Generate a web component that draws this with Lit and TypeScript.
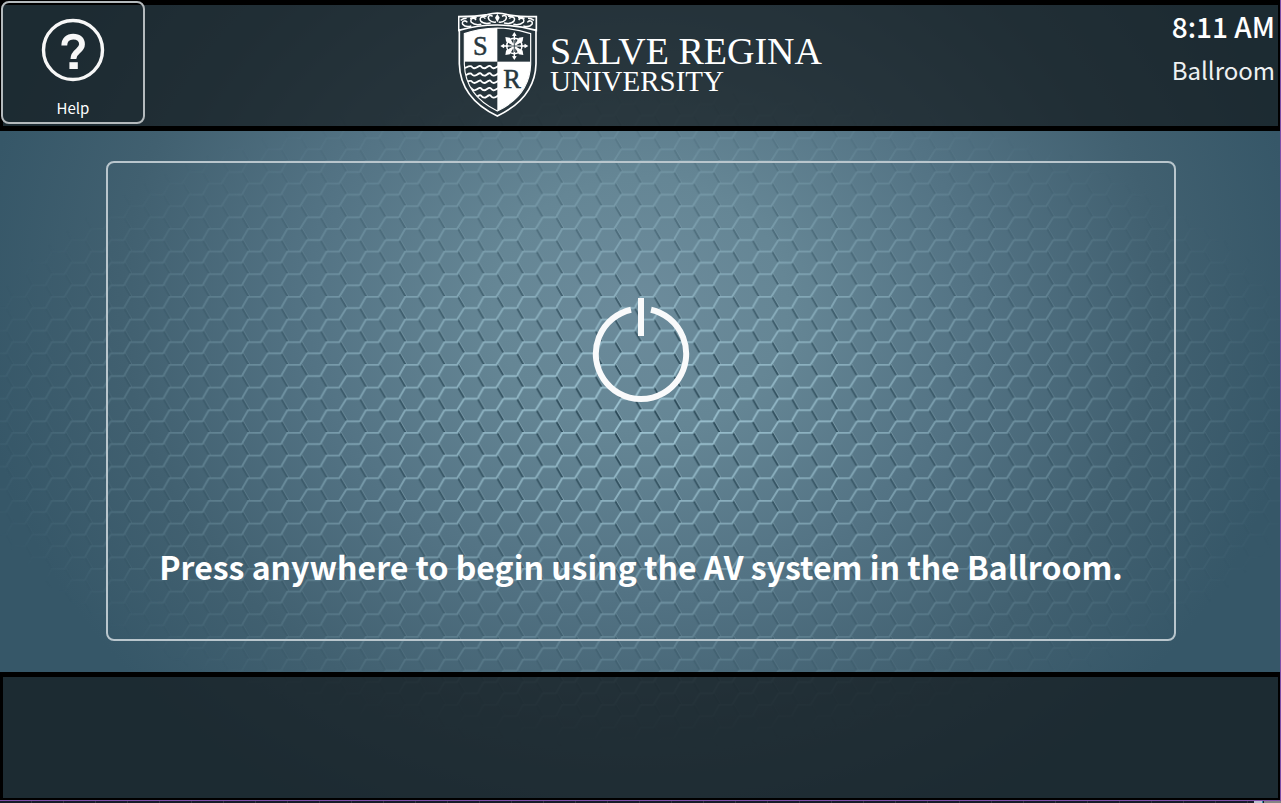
import { LitElement, html, svg, css } from "lit";
import { customElement, property } from "lit/decorators.js";

@customElement("hex-backdrop")
class HexBackdrop extends LitElement {
  static styles = css`
    :host {
      display: block;
      background: radial-gradient(
        ellipse 52% 72% at 50% 38%,
        #6c8b9b 0%,
        #658695 22%,
        #537384 50%,
        #416070 78%,
        #365768 100%
      );
    }
    svg {
      display: block;
      width: 100%;
      height: 100%;
    }
  `;
  render() {
    return html`<svg viewBox="0 0 1280 800" preserveAspectRatio="xMidYMid slice" aria-hidden="true">
      <defs>
        <pattern id="hex" width="39.27" height="22.67" patternUnits="userSpaceOnUse" patternTransform="translate(726 432)">
          <g fill="none" stroke-linecap="round">
            <path d="M6.5 0L13.1 11.3M26.2 11.3L32.7 22.6" stroke="#1d3b49" stroke-width="2.1" />
            <path d="M7.9 0L14.5 11.3M27.6 11.3L34.1 22.6" stroke="#a3c3cf" stroke-width=".7" />
            <path
              d="M0 .7H6.5M32.7 .7H39.3M13.1 12H26.2L32.7 .7M13.1 12L6.5 22.67"
              stroke="#a6cddb"
              stroke-width="1.9"
            />
          </g>
        </pattern>
        <radialGradient id="fade" gradientUnits="userSpaceOnUse" cx="0" cy="0" r="1" gradientTransform="translate(640 415) scale(690 335)">
          <stop offset="0" stop-color="#fff" stop-opacity=".88" />
          <stop offset=".3" stop-color="#fff" stop-opacity=".6" />
          <stop offset=".65" stop-color="#fff" stop-opacity=".25" />
          <stop offset="1" stop-color="#fff" stop-opacity="0" />
        </radialGradient>
        <mask id="vignette" maskUnits="userSpaceOnUse" x="0" y="0" width="1280" height="800">
          <rect width="1280" height="800" fill="url(#fade)" />
        </mask>
      </defs>
      <rect width="1280" height="800" fill="url(#hex)" mask="url(#vignette)" />
    </svg>`;
  }
}

@customElement("university-logo")
class UniversityLogo extends LitElement {
  static styles = css`
    :host {
      display: flex;
      gap: 12px;
      color: #fff;
      font-family: "Liberation Serif", serif;
    }
    svg {
      display: block;
      width: 80px;
      height: 106px;
    }
    .name {
      display: flex;
      flex-direction: column;
      padding-top: 20px;
      white-space: nowrap;
    }
    .top {
      font-size: 38px;
      line-height: 38px;
    }
    .bottom {
      font-size: 29px;
      line-height: 22px;
    }
  `;
  render() {
    const waves = [190, 212, 234, 256, 278];
    const scrolls = [1, -1];
    const rays = [0, 45, 90, 135, 180, 225, 270, 315];
    return html`<svg viewBox="24 23 240 318" aria-hidden="true">
        <defs>
          <clipPath id="inner"><path d="M43 88Q90 72 142 71Q194 72 242 88V180C240 245 200 292 142 320C84 292 45 245 43 180Z" /></clipPath>
        </defs>
        <path d="M28 76V178C30 258 80 305 142 335C204 305 256 258 258 178V76" fill="none" stroke="#fff" stroke-width="5" />
        <path d="M26 37Q80 37 112 31Q142 22 172 31Q204 37 259 37V78Q142 46 26 78Z" fill="none" stroke="#fff" stroke-width="5" />
        ${scrolls.map(
          (s) => svg`<g transform="translate(142 0) scale(${s} 1)" fill="none" stroke="#fff" stroke-width="4.5">
            <path d="M4 53Q16 55 24 47C32 36 22 30 14 36M20 56Q42 60 50 50C56 38 42 34 36 43M48 60Q68 64 78 54C84 42 70 38 64 47M78 65Q96 70 104 60C108 50 96 46 90 54M32 36Q42 34 50 39M62 40Q72 38 82 42M92 42Q102 42 110 48" />
          </g>`
        )}
        <path d="M142 28L149 40L142 54L135 40Z" fill="#fff" />
        <g clip-path="url(#inner)">
          <rect x="40" y="66" width="102" height="106" fill="#fff" />
          <rect x="142" y="172" width="104" height="156" fill="#fff" />
          ${waves.map(
            (y) => svg`<path d="M34 ${y - 4}q8 8 16 3t14 -3q7 10 17 3t12 -3q8 10 17 3t12 -3q7 10 17 3t12 -3" fill="none" stroke="#fff" stroke-width="5.5" />`
          )}
        </g>
        <path d="M43 88Q90 72 142 71Q194 72 242 88V180C240 245 200 292 142 320C84 292 45 245 43 180Z" fill="none" stroke="#fff" stroke-width="3.5" />
        <g transform="translate(193 125)" stroke="#fff" fill="#fff">
          ${rays.map(
            (a, i) => svg`<g transform="rotate(${a})">
              <path d="${i % 2 ? "M-3 -8L-8 -27L0 -38L8 -27L3 -8Z" : "M-3 -8L-2 -30L-7 -31L0 -42L7 -31L2 -30L3 -8Z"}" stroke="none" />
            </g>`
          )}
          <circle r="23" fill="none" stroke-width="4.5" />
          <circle r="9" stroke="none" />
          <path d="M0 -18V18M-18 0H18" stroke="#27373e" stroke-width="2.5" />
        </g>
        <g fill="#27373e" stroke="#27373e" stroke-width="1.5" font-family="Liberation Serif, serif" text-anchor="middle">
          <text x="91" y="151" font-size="79">S</text>
          <text x="186" y="251" font-size="79">R</text>
        </g>
      </svg>
      <div class="name"><span class="top">SALVE REGINA</span><span class="bottom">UNIVERSITY</span></div>`;
  }
}

@customElement("app-root")
class AppRoot extends LitElement {
  @property() room = "Ballroom";
  @property() time = "8:11 AM";

  static styles = css`
    :host {
      display: grid;
      grid-template-rows: 1fr auto;
      min-height: 100vh;
      background: #14171f;
      color: #fff;
      font-family: "Noto Sans CJK SC", "Noto Sans", sans-serif;
    }
    .panel {
      display: grid;
      border-right: 1px solid #7f4fa8;
      border-bottom: 1px solid #7f4fa8;
    }
    .backdrop,
    .screen {
      grid-area: 1 / 1;
    }
    .backdrop {
      min-height: 0;
      contain: size;
    }
    .screen {
      z-index: 1;
      display: grid;
      grid-template-rows: auto 1fr auto;
    }
    .bar {
      background: rgba(17, 23, 26, 0.69);
      box-shadow: inset 3px 0 #000, inset -2px 0 #000, inset 0 5px #000, inset 0 -5px #000;
    }
    header {
      display: grid;
      grid-template-columns: 1fr auto 1fr;
      height: 131px;
    }
    footer {
      height: 128px;
      box-sizing: border-box;
    }
    footer.bar {
      box-shadow: inset 3px 0 #000, inset -2px 0 #000, inset 0 5px #000, inset 0 -2px #000;
    }
    button {
      background: none;
      color: inherit;
      font-family: inherit;
      cursor: pointer;
      padding: 0;
      border-radius: 8px;
    }
    .help {
      display: flex;
      flex-direction: column;
      align-items: center;
      justify-self: start;
      gap: 14px;
      width: 144px;
      height: 123px;
      margin: 1px;
      padding-top: 15px;
      box-sizing: border-box;
      border: 2px solid #b4babd;
      font-size: 15px;
      line-height: 24px;
    }
    .help svg {
      display: block;
      width: 64px;
      height: 64px;
    }
    university-logo {
      padding-top: 12px;
    }
    .status {
      display: flex;
      flex-direction: column;
      align-items: flex-end;
      padding: 4px 5px 0 0;
    }
    .time {
      font-size: 28px;
      line-height: 44px;
      font-weight: 500;
    }
    .room {
      font-size: 24px;
      line-height: 44px;
      color: #eef1f2;
    }
    main {
      display: grid;
      padding: 30px 104px 31px 106px;
    }
    .start {
      display: flex;
      flex-direction: column;
      align-items: center;
      justify-content: space-between;
      padding: 134px 16px 48px;
      border: 2px solid #b9c6cd;
    }
    .start svg {
      display: block;
      width: 98px;
      height: 106px;
    }
    .prompt {
      font-size: 32px;
      line-height: 50px;
      font-weight: 700;
    }
    .edge {
      display: flex;
      justify-content: flex-end;
      height: 2px;
      background: repeating-linear-gradient(90deg, #171c29 0 31px, #30343f 31px 32px);
    }
    .edge-light {
      width: 8px;
      background: #b9bfcc;
      border-right: 1px solid #2a8ba4;
    }
    .edge-gray {
      width: 17px;
      margin-left: 1px;
      background: #858585;
    }
  `;

  render() {
    return html`
      <div class="panel">
        <hex-backdrop class="backdrop"></hex-backdrop>
        <div class="screen">
          <header class="bar">
            <button class="help" type="button">
              <svg viewBox="0 0 64 64" aria-hidden="true" fill="none" stroke="#f7f7f7">
                <circle cx="32" cy="32" r="29.5" stroke-width="3.4" />
                <path d="M23.3 27.5C23.3 21.5 27 18.6 32.2 18.6C37.8 18.6 41 21.7 41 26.3C41 33.4 32.4 32.7 32.4 41" stroke-width="5.8" />
                <path d="M28.4 47.6H36.8" stroke-width="6.8" />
              </svg>
              <span>Help</span>
            </button>
            <university-logo role="img" aria-label="Salve Regina University"></university-logo>
            <div class="status">
              <span class="time">${this.time}</span>
              <span class="room">${this.room}</span>
            </div>
          </header>
          <main>
            <button class="start" type="button">
              <svg viewBox="0 0 98 106" aria-hidden="true" fill="none" stroke="#f9fafb" stroke-width="6">
                <path d="M39 12.7A45.2 45.2 0 1 0 59 12.7" />
                <path d="M49 1V39" />
              </svg>
              <span class="prompt">Press anywhere to begin using the AV system in the ${this.room}.</span>
            </button>
          </main>
          <footer class="bar"></footer>
        </div>
      </div>
      <div class="edge"><span class="edge-light"></span><span class="edge-gray"></span></div>
    `;
  }
}
